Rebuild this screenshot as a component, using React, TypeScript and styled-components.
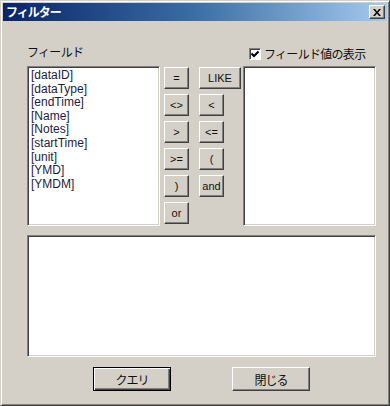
import React from "react";
import styled, { createGlobalStyle, css } from "styled-components";

const Global = createGlobalStyle`
  html, body { margin: 0; padding: 0; background: #d4d0c8; }
  body { font-family: "Liberation Sans", Arial, "Noto Sans CJK JP", sans-serif; }
  * { box-sizing: border-box; }
`;

const Win = styled.div`
  width: 390px;
  height: 406px;
  background: #d4d0c8;
  border: 1px solid;
  border-color: #d4d0c8 #404040 #404040 #d4d0c8;
  box-shadow: inset 1px 1px 0 #ffffff, inset -1px -1px 0 #808080;
  padding: 2px;
  display: flex;
  flex-direction: column;
`;

const TitleBar = styled.div`
  height: 18px;
  background: linear-gradient(to right, #0a246a 0%, #3a6ea5 50%, #a6caf0 100%);
  display: flex;
  align-items: center;
  justify-content: space-between;
  padding: 0 2px 0 3px;
`;

const Title = styled.span`
  color: #ffffff;
  font-family: "Noto Sans CJK JP", sans-serif;
  font-weight: 700;
  font-size: 12px;
  letter-spacing: -1px;
  line-height: 18px;
`;

const raised = css`
  background: #d4d0c8;
  border: 1px solid;
  border-color: #ffffff #404040 #404040 #ffffff;
  box-shadow: inset -1px -1px 0 #808080;
`;

const CloseBtn = styled.div`
  ${raised};
  width: 16px;
  height: 14px;
  display: flex;
  align-items: center;
  justify-content: center;
`;

const Body = styled.div`
  flex: 1;
  display: flex;
  flex-direction: column;
  padding: 23px 11px 0 24px;
`;

const jp = css`
  font-family: "Noto Sans CJK JP", sans-serif;
  font-size: 12px;
  letter-spacing: -0.7px;
  color: #101010;
`;

const HeaderRow = styled.div`
  height: 22px;
  display: flex;
  align-items: flex-start;
`;

const Label = styled.span<{ $w?: number }>`
  ${jp};
  line-height: 16px;
  width: ${(p) => (p.$w ? `${p.$w}px` : "auto")};
`;

const CheckWrap = styled.label`
  display: flex;
  align-items: center;
  gap: 3px;
  height: 16px;
  margin-top: 2px;
`;

const CheckBox = styled.span`
  width: 12px;
  height: 12px;
  background: #fff;
  border: 1px solid;
  border-color: #808080 #ffffff #ffffff #808080;
  box-shadow: inset 1px 1px 0 #404040;
  display: flex;
  align-items: center;
  justify-content: center;
`;

const MainRow = styled.div`
  display: flex;
  height: 160px;
`;

const sunken = css`
  background: #ffffff;
  border: 1px solid;
  border-color: #808080 #ffffff #ffffff #808080;
  box-shadow: inset 1px 1px 0 #404040, inset -1px -1px 0 #d4d0c8;
`;

const ListBox = styled.div<{ $w: number }>`
  ${sunken};
  width: ${(p) => p.$w}px;
  height: 100%;
  padding: 2px 3px;
`;

const Item = styled.div`
  font-family: "Liberation Sans", Arial, sans-serif;
  font-size: 12px;
  line-height: 13.6px;
  color: #1c1c44;
  white-space: nowrap;
`;

const Pad = styled.div`
  display: grid;
  grid-template-columns: 25px 42px;
  grid-auto-rows: 22px;
  column-gap: 10px;
  row-gap: 5px;
  padding-top: 1px;
  margin: 0 2px 0 4px;
  align-content: start;
`;

const OpBtn = styled.div<{ $wide?: boolean }>`
  ${raised};
  width: ${(p) => (p.$wide ? "42px" : "25px")};
  height: 22px;
  display: flex;
  align-items: center;
  justify-content: center;
  font-family: "Liberation Sans", Arial, sans-serif;
  font-size: 11px;
  color: #101010;
  padding-bottom: 1px;
`;

const TextArea = styled.div`
  ${sunken};
  margin-top: 9px;
  height: 122px;
`;

const Footer = styled.div`
  display: flex;
  gap: 61px;
  margin: 10px 0 0 66px;
`;

const DlgBtn = styled.div<{ $default?: boolean }>`
  width: 78px;
  height: 24px;
  display: flex;
  align-items: center;
  justify-content: center;
  ${jp};
  letter-spacing: -1px;
  ${(p) =>
    p.$default
      ? css`
          background: #d4d0c8;
          border: 1px solid #000;
          box-shadow: inset 1px 1px 0 #ffffff, inset -1px -1px 0 #404040, inset -2px -2px 0 #808080;
        `
      : css`
          ${raised};
        `}
`;

const fields = ["[dataID]", "[dataType]", "[endTime]", "[Name]", "[Notes]", "[startTime]", "[unit]", "[YMD]", "[YMDM]"];

const ops: { t: string; wide?: boolean }[] = [
  { t: "=" },
  { t: "LIKE", wide: true },
  { t: "<>" },
  { t: "<" },
  { t: ">" },
  { t: "<=" },
  { t: ">=" },
  { t: "(" },
  { t: ")" },
  { t: "and" },
  { t: "or" },
];

export default function App() {
  return (
    <>
      <Global />
      <Win>
        <TitleBar>
          <Title>フィルター</Title>
          <CloseBtn>
            <svg width="8" height="7" viewBox="0 0 8 7">
              <path d="M0 0h2l2 2.5L6 0h2L5 3.5 8 7H6L4 4.5 2 7H0l3-3.5z" fill="#000" />
            </svg>
          </CloseBtn>
        </TitleBar>
        <Body>
          <HeaderRow>
            <Label $w={222}>フィールド</Label>
            <CheckWrap>
              <CheckBox>
                <svg width="8" height="8" viewBox="0 0 8 8">
                  <path d="M0.5 3.5 L3 6 L7.5 1.5" stroke="#000" strokeWidth="2" fill="none" />
                </svg>
              </CheckBox>
              <Label>フィールド値の表示</Label>
            </CheckWrap>
          </HeaderRow>
          <MainRow>
            <ListBox $w={133}>
              {fields.map((f) => (
                <Item key={f}>{f}</Item>
              ))}
            </ListBox>
            <Pad>
              {ops.map((o) => (
                <OpBtn key={o.t} $wide={o.wide}>
                  {o.t}
                </OpBtn>
              ))}
            </Pad>
            <ListBox $w={133} />
          </MainRow>
          <TextArea />
          <Footer>
            <DlgBtn $default>クエリ</DlgBtn>
            <DlgBtn>閉じる</DlgBtn>
          </Footer>
        </Body>
      </Win>
    </>
  );
}
